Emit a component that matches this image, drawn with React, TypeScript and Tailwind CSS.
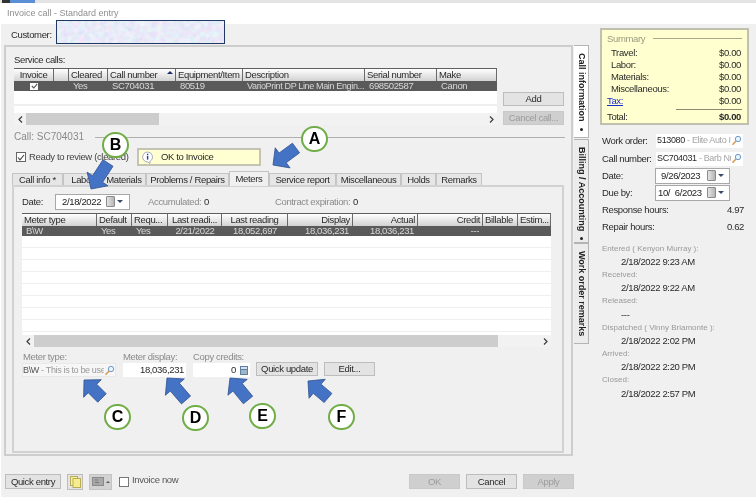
import React from "react";

const FONT = "[font-family:'Liberation_Sans',Arial,sans-serif]";

type Col = { label: string; w: number; align?: "left" | "right" | "center"; value?: string; sort?: boolean; small?: boolean };

const SERVICE_COLS: Col[] = [
  { label: "Invoice", w: 40, align: "center" },
  { label: "", w: 15 },
  { label: "Cleared", w: 39, value: "Yes" },
  { label: "Call number", w: 68, value: "SC704031", sort: true },
  { label: "Equipment/Item", w: 67, value: "80519" },
  { label: "Description", w: 122, value: "VarioPrint DP Line Main Engin...", small: true },
  { label: "Serial number", w: 72, value: "698502587" },
  { label: "Make", w: 60, value: "Canon" },
];

const METER_COLS: Col[] = [
  { label: "Meter type", w: 75, value: "B\\W" },
  { label: "Default", w: 35, value: "Yes" },
  { label: "Requ...", w: 36, value: "Yes" },
  { label: "Last readi...", w: 54, align: "center", value: "2/21/2022" },
  { label: "Last reading", w: 66, align: "center", value: "18,052,697" },
  { label: "Display", w: 65, align: "right", value: "18,036,231" },
  { label: "Actual", w: 65, align: "right", value: "18,036,231" },
  { label: "Credit", w: 65, align: "right", value: "---" },
  { label: "Billable", w: 35 },
  { label: "Estim...", w: 33 },
];

const TABS = [
  { label: "Call info *", w: 51 },
  { label: "Labor", w: 39 },
  { label: "Materials", w: 44 },
  { label: "Problems / Repairs", w: 83 },
  { label: "Meters", w: 40, active: true },
  { label: "Service report", w: 67 },
  { label: "Miscellaneous", w: 65 },
  { label: "Holds", w: 35 },
  { label: "Remarks", w: 46 },
];

const SUMMARY = [
  ["Travel:", "$0.00"],
  ["Labor:", "$0.00"],
  ["Materials:", "$0.00"],
  ["Miscellaneous:", "$0.00"],
];

const HISTORY = [
  ["Entered ( Kenyon Murray ):", "2/18/2022 9:23 AM"],
  ["Received:", "2/18/2022 9:22 AM"],
  ["Released:", "---"],
  ["Dispatched ( Vinny Briamonte ):", "2/18/2022 2:02 PM"],
  ["Arrived:", "2/18/2022 2:20 PM"],
  ["Closed:", "2/18/2022 2:57 PM"],
];

const ALIGN = { left: "justify-start", right: "justify-end", center: "justify-center" };

function HeaderRow({ cols }: { cols: Col[] }) {
  return (
    <div className="flex h-[13px] border-t border-[#5f5f5f] bg-[#5f5f5f]">
      {cols.map((c, i) => (
        <div
          key={i}
          style={{ width: c.w }}
          className={`relative flex items-center px-[2px] border-r border-[#6a6a6a] bg-gradient-to-b from-white to-[#d2d2d2] text-[#2a2a2a] overflow-hidden whitespace-nowrap ${ALIGN[c.align ?? "left"]}`}
        >
          {c.label}
          {c.sort && <span className="absolute right-[2px] top-[2px] w-0 h-0 border-x-[3px] border-x-transparent border-b-[3px] border-b-[#1c2b70]" />}
        </div>
      ))}
    </div>
  );
}

function SelectedRow({ cols, children }: { cols: Col[]; children?: React.ReactNode }) {
  return (
    <div className="flex h-[10px] bg-[#5a5a5a] text-[#d9d9d9] leading-[10px]">
      {cols.map((c, i) => (
        <div
          key={i}
          style={{ width: c.w }}
          className={`flex items-center overflow-hidden whitespace-nowrap ${c.small ? "pl-[4px] text-[9px]" : "px-[4px]"} ${ALIGN[c.align ?? "left"]}`}
        >
          {i === 0 && children ? children : c.value}
        </div>
      ))}
    </div>
  );
}

function Scrollbar({ left, thumb }: { left: number; thumb: number }) {
  return (
    <div className="flex items-center h-[12px] bg-[#f2f2f2] text-[#444]">
      <div style={{ width: left }} className="flex justify-center">
        <Chevron dir="left" />
      </div>
      <div style={{ width: thumb }} className="h-full bg-[#cdcdcd]" />
      <div className="flex-1 flex justify-end pr-[3px]">
        <Chevron dir="right" />
      </div>
    </div>
  );
}

function Chevron({ dir }: { dir: "left" | "right" }) {
  return (
    <svg width="5" height="7" viewBox="0 0 5 7" fill="none" stroke="#444" strokeWidth="1.3">
      <path d={dir === "left" ? "M4 .5 1 3.5 4 6.5" : "M1 .5 4 3.5 1 6.5"} />
    </svg>
  );
}

function SearchIcon() {
  return (
    <svg width="11" height="11" viewBox="0 0 11 11" fill="none" className="shrink-0">
      <path d="M5 6 1.5 9.8" stroke="#d99a55" strokeWidth="1.6" />
      <circle cx="7" cy="4" r="2.7" fill="#eaf3fb" stroke="#6d9cc9" strokeWidth="1" />
    </svg>
  );
}

function CalendarIcon() {
  return (
    <div className="flex items-center gap-[2px] shrink-0">
      <div className="w-[9px] h-[11px] rounded-[1px] border border-[#8a8a8a] bg-gradient-to-r from-[#e4e4e4] to-[#b5b5b5]" />
      <div className="w-0 h-0 border-x-[3px] border-x-transparent border-t-[3px] border-t-[#3b4a66]" />
    </div>
  );
}

function DateField({ value, className }: { value: string; className: string }) {
  return (
    <div className={`flex items-center justify-between bg-white border border-[#a8a8a8] text-[#222] ${className}`}>
      <span className="whitespace-pre">{value}</span>
      <CalendarIcon />
    </div>
  );
}

function Btn({ label, className, disabled }: { label: string; className: string; disabled?: boolean }) {
  return (
    <button
      className={`flex items-center justify-center border ${
        disabled ? "bg-[#cfcfcf] border-[#c9c9c9] text-[#9c9c9c]" : "bg-[#e3e3e3] border-[#bdbdbd] text-[#2a2a2a]"
      } ${className}`}
    >
      {label}
    </button>
  );
}

function SideTab({ label, h, active, dot }: { label: string; h: number; active?: boolean; dot?: boolean }) {
  return (
    <div
      style={{ height: h }}
      className={`w-[15px] flex flex-col items-center pt-[7px] gap-[3px] border border-l-0 border-[#b4b4b4] font-bold text-[#222] text-[9px] tracking-normal ${
        active ? "bg-white" : "bg-[#ececec]"
      }`}
    >
      <span className="[writing-mode:vertical-rl] whitespace-nowrap">{label}</span>
      {dot && <span className="w-[3px] h-[3px] rounded-full bg-[#222] mt-[3px]" />}
    </div>
  );
}

// block arrow, tip at (tx,ty), tail centre at (ex,ey)
function Arrow({ tx, ty, ex, ey }: { tx: number; ty: number; ex: number; ey: number }) {
  const dx = ex - tx;
  const dy = ey - ty;
  const len = Math.hypot(dx, dy);
  const ux = dx / len;
  const uy = dy / len;
  const nx = -uy;
  const ny = ux;
  const head = 12;
  const pt = (a: number, b: number) => `${tx + ux * a + nx * b},${ty + uy * a + ny * b}`;
  const points = [pt(0, 0), pt(head, 12.5), pt(head, 6), pt(len, 6), pt(len, -6), pt(head, -6), pt(head, -12.5)].join(" ");
  return <polygon points={points} fill="#4472c4" stroke="#2f528f" strokeWidth="0.8" />;
}

function Marker({ letter, className }: { letter: string; className: string }) {
  return (
    <div className={`absolute w-[27px] h-[26px] rounded-full bg-white border-2 border-[#70ad47] flex items-center justify-center text-[16px] tracking-normal font-bold text-black ${className}`}>
      {letter}
    </div>
  );
}

function Overlay() {
  return (
    <>
      <svg width="756" height="500" className="absolute left-0 top-0 pointer-events-none">
        <Arrow tx={273} ty={165} ex={296} ey={148} />
        <Arrow tx={91} ty={189} ex={108} ey={163} />
        <Arrow tx={84} ty={380} ex={102} ey={398} />
        <Arrow tx={167} ty={378} ex={186} ey={400} />
        <Arrow tx={230} ty={378} ex={248} ey={400} />
        <Arrow tx={308} ty={381} ex={328} ey={398} />
      </svg>
      <Marker letter="A" className="left-[301px] top-[126px]" />
      <Marker letter="B" className="left-[102px] top-[132px]" />
      <Marker letter="C" className="left-[104px] top-[404px]" />
      <Marker letter="D" className="left-[182px] top-[405px]" />
      <Marker letter="E" className="left-[249px] top-[403px]" />
      <Marker letter="F" className="left-[328px] top-[404px]" />
    </>
  );
}

export default function App() {
  return (
    <div className={`relative w-[756px] h-[500px] overflow-hidden bg-white text-[9.5px] tracking-[-0.35px] leading-none text-[#2a2a2a] blur-[0.3px] ${FONT}`}>
      {/* window strip */}
      <div className="flex h-[3px] bg-[#e4e4e4]">
        <div className="w-[2px]" />
        <div className="w-[8px] bg-[#333]" />
        <div className="w-[25px] bg-[#5a8fd6]" />
      </div>
      <div className="h-[21px] flex items-center pl-[7px] text-[9px] tracking-normal text-[#8f8f8f]">Invoice call - Standard entry</div>

      <div className="flex h-[473px] ml-[1px] bg-[#f0f0f0]">
        {/* left column */}
        <div className="w-[573px] shrink-0">
          <div className="flex h-[21px] pl-[10px] items-center">
            <span className="w-[45px]">Customer:</span>
            <div className="w-[169px] h-[24px] -mt-[5px] border border-[#1f3864] bg-[#cfd2f2] overflow-hidden">
              <svg width="169" height="24">
                <filter id="mottle">
                  <feTurbulence type="fractalNoise" baseFrequency="0.18" numOctaves="2" seed="4" />
                  <feColorMatrix values="0.3 0 0 0 0.66  0 0.3 0 0 0.68  0 0 0.12 0 0.88  0 0 0 0 1" />
                </filter>
                <rect width="169" height="24" filter="url(#mottle)" />
              </svg>
            </div>
          </div>

          <div className="ml-[3px] w-[569px] h-[411px] border-2 border-[#cdcdcd] pt-[8px]">
            <div className="ml-[8px] h-[13px]">Service calls:</div>
            <div className="flex ml-[8px] h-[57px]">
              <div className="w-[483px] flex flex-col bg-white">
                <HeaderRow cols={SERVICE_COLS} />
                <SelectedRow cols={SERVICE_COLS}>
                  <div className="w-[8px] h-[7px] bg-white flex items-center justify-center mx-auto">
                    <svg width="7" height="6" viewBox="0 0 7 6" fill="none" stroke="#555" strokeWidth="1.1">
                      <path d="M.8 3 2.8 5 6.2.8" />
                    </svg>
                  </div>
                </SelectedRow>
                <div className="flex-1 bg-white">
                  <div className="mt-[13px] h-[2px] bg-[#f0f0f0]" />
                </div>
                <Scrollbar left={12} thumb={133} />
              </div>
              <div className="ml-[6px] w-[61px] flex flex-col justify-end gap-[5px]">
                <Btn label="Add" className="h-[14px]" />
                <Btn label="Cancel call..." className="h-[14px]" disabled />
              </div>
            </div>

            <div className="flex items-center ml-[8px] mr-[6px] mt-[5px] h-[14px]">
              <span className="text-[10px] tracking-normal text-[#8a8a8a] whitespace-nowrap">Call: SC704031</span>
              <div className="flex-1 ml-[11px] h-[1px] bg-[#b0b0b0]" />
            </div>

            <div className="flex items-center ml-[10px] mt-[4px] h-[18px]">
              <div className="w-[10px] h-[10px] border border-[#666] bg-white flex items-center justify-center">
                <svg width="8" height="7" viewBox="0 0 8 7" fill="none" stroke="#444" strokeWidth="1.1">
                  <path d="M1 3.5 3 5.8 7 1" />
                </svg>
              </div>
              <span className="ml-[3px] w-[108px] text-[#444] whitespace-nowrap">Ready to review (cleared)</span>
              <div className="flex items-center w-[124px] h-[18px] border-2 border-[#c4c4b4] bg-[#ffffd2] pl-[2px]">
                <svg width="13" height="13" viewBox="0 0 13 13">
                  <path d="M6.5 1a5 5 0 0 1 2.6 9.3L9 12.4 6.8 11A5 5 0 1 1 6.5 1Z" fill="#fff" stroke="#8d95b5" strokeWidth="0.8" />
                  <rect x="5.9" y="2.8" width="1.4" height="1.4" fill="#1e3fb0" />
                  <rect x="5.9" y="5" width="1.4" height="3.6" fill="#1e3fb0" />
                </svg>
                <span className="ml-[7px]">OK to Invoice</span>
              </div>
            </div>

            <div className="flex items-end ml-[6px] mt-[5px] h-[14px]">
              {TABS.map((t) => (
                <div
                  key={t.label}
                  style={{ width: t.w }}
                  className={`flex items-center justify-center border border-[#c4c4c4] whitespace-nowrap ${
                    t.active ? "h-[15px] -mb-[1px] bg-[#f0f0f0] border-b-0 relative z-10" : "h-[12px] bg-[#e6e6e6] border-b-0"
                  }`}
                >
                  {t.label}
                </div>
              ))}
            </div>

            <div className="relative ml-[6px] w-[552px] h-[268px] border-2 border-[#d2d2d2] pt-[6px] px-[8px]">
              <div className="flex items-center h-[17px]">
                <span className="w-[33px]">Date:</span>
                <DateField value="2/18/2022" className="w-[75px] h-[16px] pl-[6px] pr-[6px]" />
                <span className="ml-[18px] w-[50px] text-[#8a8a8a]">Accumulated:</span>
                <span className="ml-[6px]">0</span>
                <span className="ml-[66px] w-[72px] whitespace-nowrap text-[#8a8a8a]">Contract expiration:</span>
                <span className="ml-[6px]">0</span>
              </div>
              <div className="mt-[3px] w-[529px] h-[134px] flex flex-col bg-white">
                <HeaderRow cols={METER_COLS} />
                <SelectedRow cols={METER_COLS} />
                <div className="flex-1">
                  {[0, 1, 2, 3, 4, 5, 6, 7].map((i) => (
                    <div key={i} className="h-[12px] border-b border-[#efefef]" />
                  ))}
                </div>
                <Scrollbar left={12} thumb={464} />
              </div>

              <div className="flex mt-[5px]">
                <div className="w-[94px]">
                  <div className="h-[11px] text-[#8a8a8a] pl-[1px]">Meter type:</div>
                  <div className="flex items-center justify-between h-[14px] bg-[#f6f6f6] border border-[#e8e8e8] whitespace-nowrap overflow-hidden text-[9px]">
                    <span className="overflow-hidden">
                      <span className="text-[#555]">B\W</span>
                      <span className="text-[#999]"> - This is to be use</span>
                    </span>
                    <SearchIcon />
                  </div>
                </div>
                <div className="ml-[7px] w-[63px]">
                  <div className="h-[11px] text-[#8a8a8a]">Meter display:</div>
                  <div className="flex items-center justify-end h-[14px] bg-white pr-[2px]">18,036,231</div>
                </div>
                <div className="ml-[7px] w-[57px]">
                  <div className="h-[11px] text-[#8a8a8a]">Copy credits:</div>
                  <div className="flex items-center justify-end h-[14px] bg-white pr-[2px] gap-[4px]">
                    0
                    <svg width="8" height="9" viewBox="0 0 8 9">
                      <rect width="8" height="9" fill="#5f7f9f" />
                      <rect x="1" y="1" width="6" height="2" fill="#cfe0ee" />
                      <rect x="1" y="4" width="6" height="4" fill="#9db6cc" />
                    </svg>
                  </div>
                </div>
                <Btn label="Quick update" className="ml-[6px] mt-[10px] w-[62px] h-[14px]" />
                <Btn label="Edit..." className="ml-[6px] mt-[10px] w-[51px] h-[14px]" />
              </div>
            </div>
          </div>

          {/* bottom bar */}
          <div className="flex items-center pl-[4px] mt-[18px] h-[15px]">
            <Btn label="Quick entry" className="w-[56px] h-[15px]" />
            <div className="ml-[6px] w-[16px] h-[16px] border border-[#bdbdbd] bg-[#e3e3e3] flex items-center justify-center">
              <svg width="11" height="12" viewBox="0 0 11 12">
                <rect x="0.5" y="0.5" width="7" height="9" fill="#f7efa8" stroke="#b9ad55" />
                <rect x="3" y="2.5" width="7.5" height="9" fill="#f7ec8e" stroke="#b9ad55" />
              </svg>
            </div>
            <div className="ml-[6px] w-[23px] h-[16px] border border-[#c4c4c4] bg-[#d2d2d2] flex items-center justify-center gap-[2px]">
              <svg width="12" height="9" viewBox="0 0 12 9">
                <rect x="0.5" y="0.5" width="11" height="8" fill="#a8a8a8" stroke="#8a8a8a" />
                <path d="M3 3h3M3 5.5h4" stroke="#777" />
              </svg>
              <div className="w-0 h-0 border-x-[2px] border-x-transparent border-b-[2px] border-b-[#555]" />
            </div>
            <div className="ml-[7px] w-[10px] h-[10px] border border-[#777] bg-white" />
            <span className="ml-[3px] -mt-[3px] text-[#555]">Invoice now</span>
            <div className="ml-auto flex gap-[6px]">
              <Btn label="OK" className="w-[51px] h-[15px]" disabled />
              <Btn label="Cancel" className="w-[51px] h-[15px]" />
              <Btn label="Apply" className="w-[51px] h-[15px]" disabled />
            </div>
          </div>
        </div>

        {/* side tabs */}
        <div className="w-[15px] mt-[21px] relative">
          <SideTab label="Call information" h={93} active dot />
          <div className="h-[1px]" />
          <SideTab label="Billing / Accounting" h={104} dot />
          <SideTab label="Work order remarks" h={101} />
        </div>

        {/* right column */}
        <div className="flex-1 pl-[11px] pr-[7px] pt-[4px]">
          <div className="w-[149px] h-[97px] border-2 border-[#c0c0b0] bg-[#ffffd0] px-[5px] pt-[4px]">
            <div className="flex items-center h-[9px]">
              <span className="text-[#9a9a80]">Summary</span>
              <div className="flex-1 ml-[8px] h-[1px] bg-[#a8a890]" />
            </div>
            <div className="mt-[4px]">
              {SUMMARY.map(([k, v]) => (
                <div key={k} className="flex justify-between items-center h-[12px] pl-[4px] pr-[1px]">
                  <span>{k}</span>
                  <span>{v}</span>
                </div>
              ))}
              <div className="flex justify-between items-center h-[12px] pr-[1px]">
                <span className="text-[#1a2ad0] underline">Tax:</span>
                <span>$0.00</span>
              </div>
            </div>
            <div className="ml-[69px] mt-[2px] h-[1px] bg-[#8a8a70]" />
            <div className="flex justify-between items-center h-[14px] pr-[1px]">
              <span>Total:</span>
              <span className="font-bold">$0.00</span>
            </div>
          </div>

          <div className="mt-[8px] pl-[2px]">
            <div className="flex items-center h-[15px]">
              <span className="w-[54px]">Work order:</span>
              <div className="w-[87px] h-[14px] flex items-center justify-between bg-white pl-[1px] pr-[1px] overflow-hidden whitespace-nowrap text-[9px]">
                <span className="overflow-hidden">513080 <span className="text-[#a5a5a5]">- Elite Auto I</span></span>
                <SearchIcon />
              </div>
            </div>
            <div className="flex items-center h-[17px] mt-[2px]">
              <span className="w-[54px]">Call number:</span>
              <div className="w-[87px] h-[14px] flex items-center justify-between bg-white pl-[1px] pr-[1px] overflow-hidden whitespace-nowrap text-[9px]">
                <span className="overflow-hidden">SC704031 <span className="text-[#a5a5a5]">- Barb Nu</span></span>
                <SearchIcon />
              </div>
            </div>
            <div className="flex items-center h-[17px]">
              <span className="w-[53px]">Date:</span>
              <DateField value="9/26/2023" className="w-[75px] h-[16px] pl-[5px] pr-[5px]" />
            </div>
            <div className="flex items-center h-[17px]">
              <span className="w-[53px]">Due by:</span>
              <DateField value="10/  6/2023" className="w-[75px] h-[16px] pl-[2px] pr-[5px]" />
            </div>
            <div className="flex justify-between items-center h-[17px] pr-[5px]">
              <span>Response hours:</span>
              <span>4.97</span>
            </div>
            <div className="flex justify-between items-center h-[17px] pr-[5px]">
              <span>Repair hours:</span>
              <span>0.62</span>
            </div>
          </div>

          <div className="mt-[7px] pl-[2px]">
            {HISTORY.map(([k, v]) => (
              <div key={k} className="h-[26.4px]">
                <div className="h-[13px] flex items-center text-[8px] tracking-normal text-[#999]">{k}</div>
                <div className="h-[13px] flex items-center pl-[19px]">{v}</div>
              </div>
            ))}
          </div>
        </div>
      </div>

      <Overlay />
    </div>
  );
}
